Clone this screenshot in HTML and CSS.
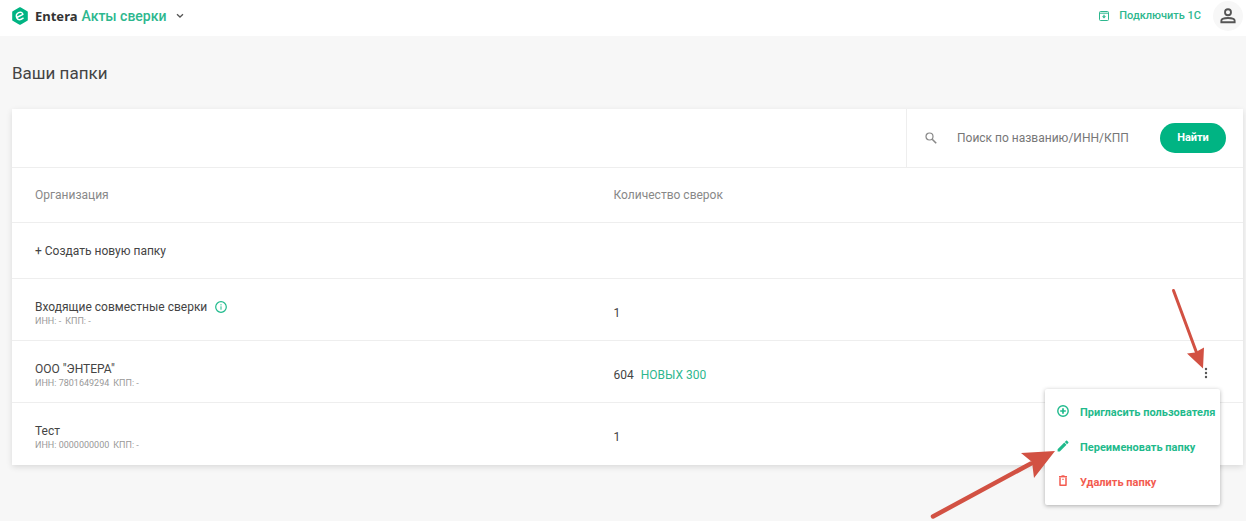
FILE: index.html
```
<!DOCTYPE html>
<html lang="ru">
<head>
    <meta charset="UTF-8">
    <meta name="viewport" content="width=device-width, initial-scale=1.0">
    <title>Entera - Акты сверки</title>
    <link rel="stylesheet" href="styles.css">
</head>
<body>
    <!-- Header -->
    <header class="header">
        <a href="#" class="logo">
            <svg width="16" height="18" viewBox="0 0 16 18">
                <path d="M8 1.200 14.800 5v8L8 16.800 1.200 13V5z" fill="#00b483" stroke="#00b483" stroke-width="2" stroke-linejoin="round"/>
                <path d="M4.800 10.500 10.900 7.400C10.500 5.300 8.500 4.700 6.600 5.700 4.700 6.700 3.900 8.900 4.800 11c.9 2 3.500 2.300 6.300.2" fill="none" stroke="#fff" stroke-width="1.500" stroke-linecap="round" stroke-linejoin="round"/>
            </svg>
            <span class="logo-name">Entera</span>
        </a>
        <button type="button" class="section-button">
            Акты сверки
            <svg width="8" height="6" viewBox="0 0 8 6"><path d="M1 1.200 4 4l3-2.800" fill="none" stroke="#555" stroke-width="1.300"/></svg>
        </button>
        <a href="#" class="connect-link">
            <svg width="12" height="12" viewBox="0 0 12 12" fill="none" stroke="#2db78e">
                <rect x="1.500" y="1.500" width="9" height="9" rx="1"/>
                <path d="M1.500 3.200h9"/>
                <path d="M6 4.800v2" stroke-width="1.300"/>
                <path d="M3.900 6.300h4.200L6 8.600z" fill="#2db78e" stroke="none"/>
            </svg>
            Подключить 1С
        </a>
        <button type="button" class="user-button" aria-label="Профиль">
            <svg width="20" height="20" viewBox="0 0 24 24" fill="none" stroke="#555" stroke-width="2.200">
                <circle cx="12" cy="7.500" r="3.600"/>
                <path d="M4 19.500v-1.700c0-2.400 4.500-3.400 8-3.400s8 1 8 3.400v1.700z"/>
            </svg>
        </button>
    </header>

    <main class="main">
        <h1 class="title">Ваши папки</h1>

        <div class="card">
            <!-- Search -->
            <form class="search">
                <svg width="12" height="12" viewBox="0 0 12 12" fill="none" stroke="#888">
                    <circle cx="4.500" cy="4.500" r="3.500" stroke-width="1.200"/>
                    <path d="m7.200 7.200 4 4" stroke-width="1.600"/>
                </svg>
                <input type="text" class="search-input" placeholder="Поиск по названию/ИНН/КПП" aria-label="Поиск по названию/ИНН/КПП">
                <button type="submit" class="search-button">Найти</button>
            </form>

            <!-- Folders -->
            <table class="folders">
                <thead>
                    <tr>
                        <th class="col-name">Организация</th>
                        <th>Количество сверок</th>
                        <th class="col-actions"></th>
                    </tr>
                </thead>
                <tbody>
                    <tr class="create-row">
                        <td colspan="3"><button type="button" class="create-button">+ Создать новую папку</button></td>
                    </tr>
                    <tr>
                        <td>
                            <div class="name">
                                Входящие совместные сверки
                                <svg width="12" height="12" viewBox="0 0 12 12" fill="none" stroke="#1fba8c">
                                    <circle cx="6" cy="6" r="5.300" stroke-width="1.200"/>
                                    <path d="M6 5.300v3.400M6 3.200v1.200"/>
                                </svg>
                            </div>
                            <div class="details"><span>ИНН: -</span><span>КПП: -</span></div>
                        </td>
                        <td>1</td>
                        <td></td>
                    </tr>
                    <tr>
                        <td>
                            <div class="name">ООО "ЭНТЕРА"</div>
                            <div class="details"><span>ИНН: 7801649294</span><span>КПП: -</span></div>
                        </td>
                        <td>604 <a href="#" class="new-count">НОВЫХ 300</a></td>
                        <td class="actions">
                            <button type="button" class="dots-button" aria-label="Действия">
                                <svg width="4" height="12" viewBox="0 0 4 12" fill="#555">
                                    <circle cx="2" cy="2" r="1.200"/>
                                    <circle cx="2" cy="6" r="1.200"/>
                                    <circle cx="2" cy="10" r="1.200"/>
                                </svg>
                            </button>
                            <div class="menu">
                                <button type="button" class="menu-item">
                                    <svg width="12" height="12" viewBox="0 0 12 12" fill="none" stroke="#1fba8c" stroke-width="1.400">
                                        <circle cx="6" cy="6" r="5.200"/>
                                        <path d="M6 3.200v5.600M3.200 6h5.600" stroke-width="1.700"/>
                                    </svg>
                                    Пригласить пользователя
                                </button>
                                <button type="button" class="menu-item">
                                    <svg width="12" height="12" viewBox="0 0 12 12" fill="#1fba8c">
                                        <path d="M.6 9.200 7.300 2.500l2.200 2.200-6.700 6.700H.6zM7.800 2l1.300-1.300c.3-.3.700-.3 1 0l1.200 1.200c.3.300.3.700 0 1L10 4.200z"/>
                                    </svg>
                                    Переименовать папку
                                </button>
                                <button type="button" class="menu-item delete">
                                    <svg width="12" height="12" viewBox="0 0 12 12" fill="none" stroke="#f35b50">
                                        <path d="M2 1.700h8" stroke-width="1.400"/>
                                        <path d="M4.500.8h3"/>
                                        <path d="M3 2.500v7.700h6V2.500" stroke-width="1.500" stroke-linejoin="round"/>
                                        <path d="M5 4.300h2" stroke-width=".8"/>
                                    </svg>
                                    Удалить папку
                                </button>
                            </div>
                        </td>
                    </tr>
                    <tr>
                        <td>
                            <div class="name">Тест</div>
                            <div class="details"><span>ИНН: 0000000000</span><span>КПП: -</span></div>
                        </td>
                        <td>1</td>
                        <td></td>
                    </tr>
                </tbody>
            </table>
        </div>
    </main>

    <!-- Pointer arrows -->
    <svg class="arrows" width="326" height="241" viewBox="920 280 326 241" fill="#d25143" stroke="#d25143" stroke-linecap="round">
        <path d="m1173.500 290.500 23 62" stroke-width="3"/>
        <path d="m1203 368.500-16-15 8-1 9-5z" stroke="none"/>
        <path d="m933 516.500 98-53" stroke-width="4.500"/>
        <path d="m1055 451-34 2 11 9 2 16z" stroke="none"/>
    </svg>
</body>
</html>
```
FILE: styles.css
```
        * {
            box-sizing: border-box;
        }
        body {
            margin: 0;
            min-height: 100vh;
            background: #f7f7f7;
            color: #444;
            font-family: Roboto, "Noto Sans", sans-serif;
            font-size: 12px;
            line-height: 16px;
        }
        button {
            padding: 0;
            border: none;
            background: none;
            color: inherit;
            font: inherit;
            cursor: pointer;
        }
        a {
            color: #2db78e;
            text-decoration: none;
        }
        svg {
            flex-shrink: 0;
        }
        .header {
            display: flex;
            align-items: center;
            height: 36px;
            padding: 0 3px 4px 12px;
            background: #fff;
        }
        .logo {
            display: flex;
            align-items: center;
            gap: 7px;
        }
        .logo-name {
            color: #333;
            font-family: "Noto Sans", sans-serif;
            font-size: 13px;
            font-weight: 700;
        }
        .section-button {
            display: flex;
            align-items: center;
            gap: 10px;
            margin-left: 4px;
            color: #2db78e;
            font-size: 14px;
            font-weight: 500;
        }
        .connect-link {
            display: flex;
            align-items: center;
            gap: 9px;
            margin-left: auto;
            font-size: 11px;
            font-weight: 500;
        }
        .user-button {
            display: flex;
            align-items: center;
            justify-content: center;
            width: 30px;
            height: 30px;
            margin-left: 12px;
            border-radius: 50%;
            background: #f7f7f7;
        }
        .main {
            padding: 25px 3px 0 12px;
        }
        .title {
            margin: 0 0 24px;
            font-size: 17px;
            font-weight: 400;
            line-height: 24px;
        }
        .card {
            background: #fff;
            box-shadow: 0 2px 6px rgb(0 0 0 / 12%);
        }
        .search {
            display: flex;
            align-items: center;
            width: 337px;
            height: 58px;
            margin-left: auto;
            padding: 0 17px 0 18px;
            border-left: 1px solid #eee;
        }
        .search-input {
            flex: 1;
            min-width: 0;
            margin-left: 20px;
            padding: 0;
            border: none;
            outline: none;
            color: #444;
            font: inherit;
        }
        .search-input::placeholder {
            color: #777;
            opacity: 1;
        }
        .search-button {
            width: 66px;
            height: 30px;
            border-radius: 15px;
            background: #00b483;
            color: #fff;
            font-size: 11px;
            font-weight: 700;
        }
        .folders {
            width: 100%;
            border-collapse: collapse;
            table-layout: fixed;
        }
        .folders th,
        .folders td {
            height: 62px;
            padding: 6px 23px 0;
            border-top: 1px solid #eee;
            text-align: left;
        }
        .folders th {
            height: 55px;
            padding-top: 0;
            color: #888;
            font-weight: 400;
        }
        .folders .create-row td {
            height: 56px;
            padding-top: 0;
        }
        .col-name {
            width: 47%;
        }
        .col-actions {
            width: 76px;
        }
        .name {
            display: flex;
            align-items: center;
            gap: 8px;
        }
        .details {
            display: flex;
            gap: 4px;
            color: #999;
            font-size: 9px;
            line-height: 12px;
        }
        .new-count {
            margin-left: 4px;
        }
        .folders .actions {
            position: relative;
            padding-right: 35px;
            text-align: right;
        }
        .dots-button svg {
            display: block;
        }
        .menu {
            position: absolute;
            top: 48px;
            right: 23px;
            z-index: 1;
            width: 175px;
            padding: 6px 0 5px;
            border-radius: 2px;
            background: #fff;
            box-shadow: 0 1px 4px rgb(0 0 0 / 30%);
        }
        .menu-item {
            display: flex;
            align-items: center;
            gap: 11px;
            width: 100%;
            height: 35px;
            padding-left: 12px;
            color: #1fba8c;
            font-size: 11px;
            font-weight: 700;
            white-space: nowrap;
        }
        .menu-item svg {
            margin-bottom: 4px;
        }
        .menu-item.delete {
            color: #f35b50;
        }
        .arrows {
            position: absolute;
            top: 280px;
            right: 0;
            z-index: 2;
            pointer-events: none;
        }
```
